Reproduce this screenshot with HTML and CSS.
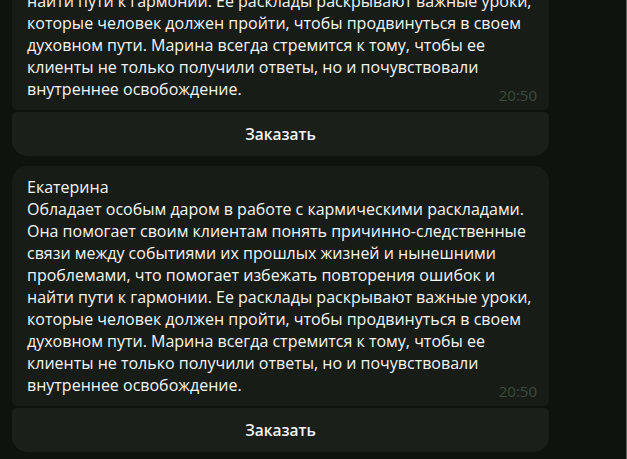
FILE: index.html
```html
<!DOCTYPE html>
<html lang="ru">
<head>
<meta charset="utf-8">
<title>Chat</title>
<link rel="stylesheet" href="styles.css">
</head>
<body>
<div class="app">
  <div class="chat">
    <div class="group">
      <div class="bubble">
        <div class="text">Марина<br>Обладает особым даром в работе с кармическими раскладами.<br>Она помогает своим клиентам понять причинно-следственные<br>связи между событиями их прошлых жизней и нынешними<br>проблемами, что помогает избежать повторения ошибок и<br>найти пути к гармонии. Ее расклады раскрывают важные уроки,<br>которые человек должен пройти, чтобы продвинуться в своем<br>духовном пути. Марина всегда стремится к тому, чтобы ее<br>клиенты не только получили ответы, но и почувствовали<br>внутреннее освобождение.</div>
        <span class="time">20:50</span>
      </div>
      <button class="order">Заказать</button>
    </div>
    <div class="group">
      <div class="bubble">
        <div class="text">Екатерина<br>Обладает особым даром в работе с кармическими раскладами.<br>Она помогает своим клиентам понять причинно-следственные<br>связи между событиями их прошлых жизней и нынешними<br>проблемами, что помогает избежать повторения ошибок и<br>найти пути к гармонии. Ее расклады раскрывают важные уроки,<br>которые человек должен пройти, чтобы продвинуться в своем<br>духовном пути. Марина всегда стремится к тому, чтобы ее<br>клиенты не только получили ответы, но и почувствовали<br>внутреннее освобождение.</div>
        <span class="time">20:50</span>
      </div>
      <button class="order">Заказать</button>
    </div>
  </div>
</div>
</body>
</html>
```
FILE: styles.css
```css
html, body {
  margin: 0;
  padding: 0;
  background: #0e130e;
  overflow: hidden;
}
.app {
  display: flow-root;
  width: 626px;
  height: 100vh;
  overflow: hidden;
  border-right: 1px solid #5e635e;
}
.chat {
  margin-top: -130px;
  padding-left: 12px;
  display: flex;
  flex-direction: column;
  gap: 10px;
}
.group {
  width: 537px;
  display: flex;
  flex-direction: column;
  gap: 2px;
}
.bubble {
  position: relative;
  background: #171c16;
  border-radius: 15px 15px 5px 5px;
  padding: 10px 15px 10px 15px;
  font-family: "Open Sans", "Noto Sans", sans-serif;
  font-size: 16px;
  line-height: 22px;
  color: #f5f5f5;
  white-space: nowrap;
}
.time {
  position: absolute;
  right: 12px;
  bottom: 7px;
  font-family: "Open Sans", "Noto Sans", sans-serif;
  font-size: 15px;
  line-height: 16px;
  color: #3f4b3e;
}
.order {
  height: 44px;
  border: 0;
  background: #1a1f19;
  border-radius: 5px 5px 15px 15px;
  color: #f5f5f5;
  font-family: "Open Sans", "Noto Sans", sans-serif;
  font-weight: 600;
  font-size: 15.5px;
  padding: 0;
}
```
